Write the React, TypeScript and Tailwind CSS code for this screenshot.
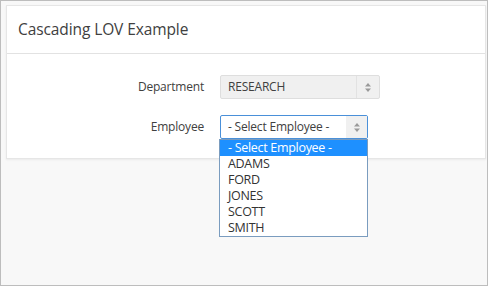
import React from 'react';

const employees = ['ADAMS', 'FORD', 'JONES', 'SCOTT', 'SMITH'];

const Arrows = () => (
  <svg width="6" height="9" viewBox="0 0 6 9" className="fill-[#9a9a9a]">
    <path d="M3 0 L6 3.5 H0 Z" />
    <path d="M3 9 L6 5.5 H0 Z" />
  </svg>
);

const App: React.FC = () => {
  const font = "font-['Open_Sans',sans-serif]";

  return (
    <div className={`w-[488px] h-[286px] border border-[#bdbdbd] bg-[#f8f8f8] ${font} text-[#404040] overflow-hidden`}>
      <div className="mt-[4px] ml-[5px] mr-[1px] bg-white border border-[#e6e6e6] shadow-[0_1px_2px_rgba(0,0,0,0.06)]">
        <div className="h-[48px] flex items-center pl-[11px] border-b border-[#e2e2e2]">
          <h2 className="text-[15.5px] tracking-[-0.1px] text-[#404040]">Cascading LOV Example</h2>
        </div>
        <div className="pt-[21px] pb-[19px] flex flex-col gap-[16px]">
          <div className="flex items-center">
            <label className="w-[197px] text-right text-[12px] tracking-[-0.2px]">Department</label>
            <div className="ml-[16px] w-[160px] h-[24px] flex bg-[#f0f0f0] border border-[#dedede] rounded-[2px]">
              <span className="flex-1 pl-[7px] text-[12px] leading-[22px] tracking-[-0.2px]">RESEARCH</span>
              <span className="w-[23px] flex items-center justify-center border-l border-[#e2e2e2]">
                <Arrows />
              </span>
            </div>
          </div>
          <div className="flex items-center">
            <label className="w-[197px] text-right text-[12px] tracking-[-0.2px]">Employee</label>
            <div className="relative ml-[16px] w-[148px] h-[24px] flex bg-white border border-[#4a90d9] rounded-[2px]">
              <span className="flex-1 pl-[7px] text-[12px] leading-[22px] tracking-[-0.2px]">- Select Employee -</span>
              <span className="w-[21px] flex items-center justify-center bg-[#f0f0f0]">
                <Arrows />
              </span>
              <ul className="absolute left-[-2px] top-[23px] w-[149px] bg-white border border-[#7a9cbf] z-10 text-[12.5px] leading-[16px] tracking-[-0.3px]">
                <li className="bg-[#1e90ff] text-white pl-[8px]">- Select Employee -</li>
                {employees.map(name => (
                  <li key={name} className="pl-[8px] text-[#333]">{name}</li>
                ))}
              </ul>
            </div>
          </div>
        </div>
      </div>
    </div>
  );
};

export default App;
